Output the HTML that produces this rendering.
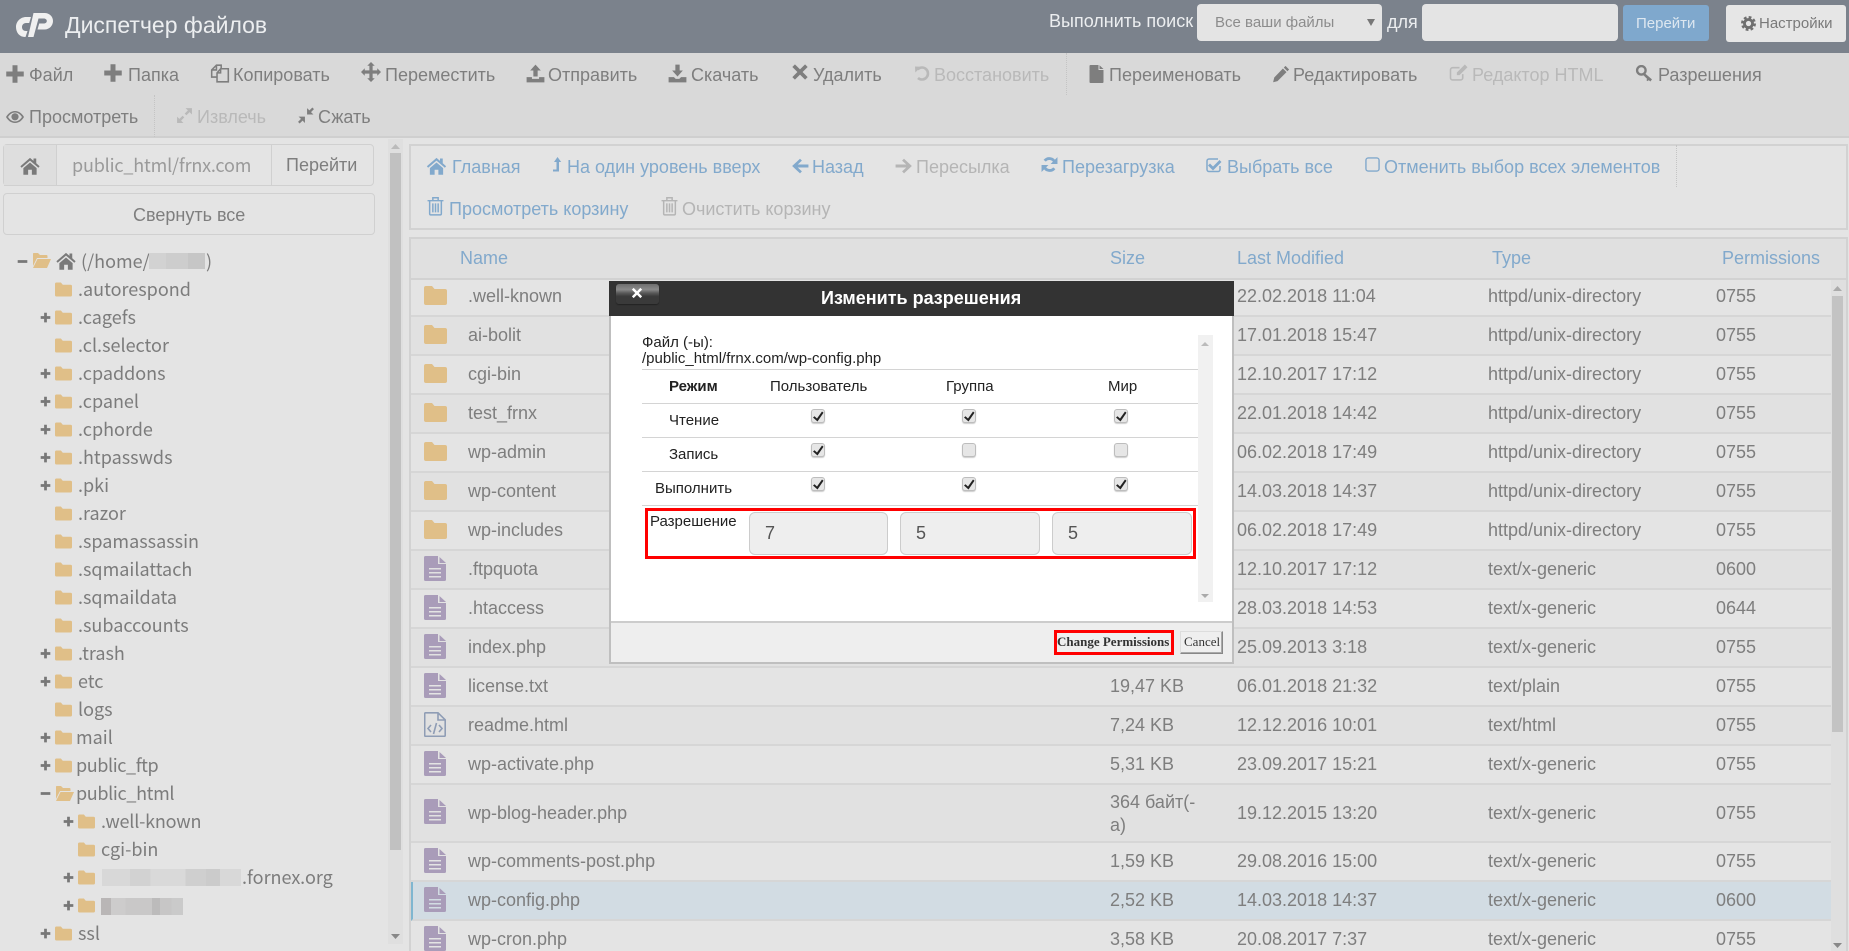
<!DOCTYPE html>
<html lang="ru"><head><meta charset="utf-8"><title>Диспетчер файлов</title>
<style>
html,body{margin:0;padding:0;width:1849px;height:951px;overflow:hidden;background:#e4e4e4}
body{position:relative;font:18px/20px "Liberation Sans",sans-serif;color:#7e7e7e}
div,span,svg{position:absolute;box-sizing:border-box}
span{white-space:nowrap}
.d{color:#b9b9b9}.l{color:#82a9cc}.ld{color:#b5b5b5}
svg{fill:currentColor;overflow:visible}
.rows .r{left:0;width:1420px;height:39px;border-bottom:2px solid #d6d6d6;background:#e4e4e4}
.rows .r:nth-child(even){background:#e1e1e1}
.r span{top:8px}.n{left:57px}.s{left:699px}.m{left:826px}.y{left:1077px}.p{left:1305px}
.fo{left:13px;top:8px;width:23px;height:19px;color:#e0bf88}
.fi{left:13px;top:5px;width:22px;height:25px;color:#a99cb9}
.t{font-family:"Noto Sans CJK JP",sans-serif;font-size:18px;line-height:24px;color:#7c7c7c}
.fl{width:17px;height:15px;color:#e0bf88}
.pm{width:11px;height:11px;color:#777}
.mt{color:#222;font-size:15px}
.cb{width:14px;height:14px;background:#e6e6e6;border:1px solid #bdbdbd;border-radius:3px;box-shadow:0 1px 1px #ccc}
.cb svg{left:1px;top:0;width:11px;height:12px;color:#222}
.inp{top:512px;height:43px;background:#eee;border:1px solid #ccc;border-radius:6px;color:#555}
.inp span{left:15px;top:10px;font-size:18px}
</style></head><body>
<svg width="0" height="0" style="position:absolute">
<symbol id="plus" viewBox="0 0 16 16"><path d="M6 1h4v5h5v4h-5v5H6v-5H1V6h5z"/></symbol>
<symbol id="minus" viewBox="0 0 16 16"><path d="M1 6h14v4H1z"/></symbol>
<symbol id="copy" viewBox="0 0 16 16"><path fill="none" stroke="currentColor" stroke-width="1.300" d="M5.500 11H1V5l4-4h4v3M5.500 15V7.500l3-3.500H15v11zM8.500 4v3.500H5.500M5 1v4H1"/></symbol>
<symbol id="move" viewBox="0 0 16 16"><path d="M8 0l3 3H9.300v3.700H13V5l3 3-3 3V9.300H9.300V13H11l-3 3-3-3h1.700V9.300H3V11L0 8l3-3v1.700h3.700V3H5z"/></symbol>
<symbol id="up" viewBox="0 0 16 16"><path d="M8 .5l4.500 5H9.800v5H6.200v-5H3.500zM.5 11H5v1.500h6V11h4.500v4.500H.5z"/></symbol>
<symbol id="down" viewBox="0 0 16 16"><path d="M6.200.5h3.600v5h2.700L8 10.500l-4.500-5h2.700zM.5 11H5l1.500 1.500h3L11 11h4.500v4.500H.5z"/></symbol>
<symbol id="x" viewBox="0 0 16 16"><path d="M3.500 1.200L8 5.700l4.500-4.500 2.300 2.300L10.300 8l4.500 4.500-2.300 2.300L8 10.300l-4.500 4.500-2.300-2.300L5.700 8 1.200 3.500z"/></symbol>
<symbol id="undo" viewBox="0 0 16 16"><path fill="none" stroke="currentColor" stroke-width="2.600" d="M3.500 4.500A6 6 0 1 1 4 13"/><path d="M1 1.500l6 .3-5.700 5.700z"/></symbol>
<symbol id="file" viewBox="0 0 16 18"><path d="M2 0h8v5h5v12a1 1 0 0 1-1 1H2a1 1 0 0 1-1-1V1a1 1 0 0 1 1-1zM11 .3L15 4h-4z"/></symbol>
<symbol id="doc" viewBox="0 0 22 25"><path fill-rule="evenodd" d="M1.500 0H14v8h8v15.500a1.500 1.500 0 0 1-1.500 1.500h-19A1.500 1.500 0 0 1 0 23.500V1.500A1.500 1.500 0 0 1 1.500 0zM5 12v1.500h12V12zM5 16v1.500h12V16zM5 20v1.500h12V20z"/><path d="M15.500 1L22 7h-6.500z"/></symbol>
<symbol id="code" viewBox="0 0 22 25"><path fill="none" stroke="currentColor" stroke-width="1.600" d="M1.500.8H14l7.200 7v15.700a.8.800 0 0 1-.8.800H1.500a.8.800 0 0 1-.8-.800V1.500a.8.800 0 0 1 .8-.700zM14 1v7h7M7 13l-3 3.500 3 3.500M15 13l3 3.500-3 3.500M12.500 11l-3 11"/></symbol>
<symbol id="pencil" viewBox="0 0 16 16"><path d="M12 .8l3.200 3.200-1.500 1.500-3.200-3.200zM9.700 3.100l3.200 3.200-8 8-3.900 1 1-4.200z"/></symbol>
<symbol id="edit" viewBox="0 0 18 16"><path fill="none" stroke="currentColor" stroke-width="1.500" d="M12.500 9.500V13a2 2 0 0 1-2 2H3a2 2 0 0 1-2-2V5.500a2 2 0 0 1 2-2h6.500"/><path d="M14.500.5L17 3l-7.500 7.500H7V8z"/></symbol>
<symbol id="key" viewBox="0 0 16 16"><path fill="none" stroke="currentColor" stroke-width="2.200" d="M9.500 5a4 4 0 1 1-8 0 4 4 0 0 1 8 0z"/><path d="M8.500 7.500l7 6-1.500 2-1.500-1.300-1 1-1.300-1 .8-1-3.500-3.500z"/></symbol>
<symbol id="eye" viewBox="0 0 18 14"><path fill-rule="evenodd" d="M9 1C5 1 2 3.500 0 7c2 3.500 5 6 9 6s7-2.500 9-6c-2-3.500-5-6-9-6zM9 2.500C6.500 2.500 4 4 2 7c2 3 4.500 4.500 7 4.500s5-1.500 7-4.500c-2-3-4.500-4.500-7-4.500z"/><circle cx="9" cy="6.800" r="3.600"/></symbol>
<symbol id="expand" viewBox="0 0 16 16"><path d="M9 1h6v6l-2.200-2.200-3 3-1.600-1.600 3-3zM7 15H1V9l2.200 2.200 3-3 1.600 1.600-3 3z"/></symbol>
<symbol id="compress" viewBox="0 0 16 16"><path d="M9 7V1l2.200 2.200L14 .5 15.500 2l-2.800 2.800L15 7zM7 9v6l-2.200-2.200L2 15.500.5 14l2.800-2.800L1 9z"/></symbol>
<symbol id="home" viewBox="0 0 16 16"><path d="M8 1.500L.3 8.200l1 1.200L8 3.700l6.700 5.700 1-1.200L13 5.800V2h-2.200v1.900zM2.700 9.700L8 5.200l5.300 4.500V15H9.500v-4h-3v4H2.700z"/></symbol>
<symbol id="lvl" viewBox="0 0 12 16"><path d="M5.500 0l3.700 5H7v9.500H1v-2h3.500V5H2z"/></symbol>
<symbol id="left" viewBox="0 0 16 16"><path d="M8 1.500L9.700 3.200 6 6.700h9.500v2.600H6l3.700 3.500L8 14.500 1 8z"/></symbol>
<symbol id="right" viewBox="0 0 16 16"><path d="M8 1.500L6.300 3.200 10 6.700H.5v2.600H10l-3.700 3.500L8 14.500 15 8z"/></symbol>
<symbol id="sync" viewBox="0 0 16 16"><path fill="none" stroke="currentColor" stroke-width="2.700" d="M13 6A5.500 5.500 0 0 0 3.500 4.500M3 10a5.500 5.500 0 0 0 9.500 1.500"/><path d="M15.500 1v6.500H9zM.5 15V8.500H7z"/></symbol>
<symbol id="chk" viewBox="0 0 16 16"><path fill="none" stroke="currentColor" stroke-width="1.500" d="M14 9v3.500a2 2 0 0 1-2 2H3a2 2 0 0 1-2-2V4a2 2 0 0 1 2-2h9"/><path d="M4 6.500l3 3L13.500 3l2 2L7 13.500 2 8.500z"/></symbol>
<symbol id="sq" viewBox="0 0 16 16"><rect x="1" y="1" width="14" height="14" rx="2.500" fill="none" stroke="currentColor" stroke-width="1.500"/></symbol>
<symbol id="trash" viewBox="0 0 16 18"><path fill="none" stroke="currentColor" stroke-width="1.400" d="M.5 4h15M2.500 4v12.300c0 .6.400 1 1 1h9c.6 0 1-.4 1-1V4M5.500 4V1.200h5V4M5.500 6.500v8.500M8 6.500v8.500M10.500 6.500v8.500"/></symbol>
<symbol id="gear" viewBox="0 0 16 16"><circle cx="8" cy="8" r="4.300" fill="none" stroke="currentColor" stroke-width="3"/><circle cx="8" cy="8" r="6.600" fill="none" stroke="currentColor" stroke-width="2.800" stroke-dasharray="2.900 2.280"/></symbol>
<symbol id="folder" viewBox="0 0 23 19"><path d="M2 0h6l2.500 3H21a2 2 0 0 1 2 2v12a2 2 0 0 1-2 2H2a2 2 0 0 1-2-2V2a2 2 0 0 1 2-2z"/></symbol>
<symbol id="fopen" viewBox="0 0 19 15"><path d="M1.500 0h4.500l2 2h6.500a1 1 0 0 1 1 1v2H5L1 13V1a1 1 0 0 1 .5-1zM5.500 6H19l-4 9H1z"/></symbol>
<symbol id="ck" viewBox="0 0 11 12"><path d="M1.500 6.200L4 8.500 9 1.500l1.500 1.200L4.500 11.500 0 7.500z"/></symbol>
</svg>

<!-- header -->
<div style="left:0;top:0;width:1849px;height:53px;background:#7b828c"></div>
<svg style="left:16px;top:12px;width:37px;height:25px;color:#f0f0f0" viewBox="0 0 37 25"><path d="M15 5L13.200 11H10C7.500 11 6 13 6 15C6 17.500 7.500 19 10 19H11.500L9.500 25H9C3.500 25 0 20.500 0 15C0 9.500 4.500 5 10 5Z"/><path d="M17.500 1H28.500C33.500 1 37 4.500 37 9C37 13.500 33.500 17.500 28.500 17.500H21.500L23.200 11.500H27.500C29.500 11.500 30.800 10.500 30.800 9C30.800 7.500 29.500 6.500 27.500 6.500H22.500L17.500 25H12Z"/></svg>
<span style="left:65px;top:13px;font-size:23px;line-height:24px;color:#eceef0">Диспетчер файлов</span>
<span style="left:1049px;top:11px;color:#eceef0">Выполнить поиск</span>
<div style="left:1197px;top:4px;width:185px;height:37px;background:#e4e4e4;border-radius:4px"></div>
<span style="left:1215px;top:13px;font-size:15px;color:#8c8c8c">Все ваши файлы</span>
<svg style="left:1367px;top:19px;width:8px;height:7px;color:#777" viewBox="0 0 8 7"><path d="M0 0h8L4 7z"/></svg>
<span style="left:1387px;top:12px;color:#eceef0">для</span>
<div style="left:1422px;top:4px;width:196px;height:37px;background:#e4e4e4;border-radius:4px"></div>
<div style="left:1623px;top:5px;width:86px;height:36px;background:#7fa8cd;border-radius:3px"></div>
<span style="left:1636px;top:14px;font-size:15px;color:#dde7f0">Перейти</span>
<div style="left:1726px;top:5px;width:120px;height:37px;background:#e6e6e6;border-radius:3px"></div>
<svg style="left:1741px;top:16px;width:15px;height:15px;color:#6f6f6f"><use href="#gear"/></svg>
<span style="left:1759px;top:14px;font-size:15px;color:#7a7a7a">Настройки</span>

<!-- toolbar -->
<div style="left:0;top:53px;width:1849px;height:85px;background:#d9d9d9;border-bottom:2px solid #cfcfcf"></div>
<svg style="left:5px;top:64px;width:20px;height:20px"><use href="#plus"/></svg><span style="left:29px;top:65px">Файл</span>
<svg style="left:103px;top:63px;width:20px;height:20px"><use href="#plus"/></svg><span style="left:128px;top:65px">Папка</span>
<svg style="left:210px;top:64px;width:20px;height:19px"><use href="#copy"/></svg><span style="left:233px;top:65px">Копировать</span>
<svg style="left:361px;top:62px;width:20px;height:20px"><use href="#move"/></svg><span style="left:385px;top:65px">Переместить</span>
<svg style="left:526px;top:64px;width:19px;height:19px"><use href="#up"/></svg><span style="left:548px;top:65px">Отправить</span>
<svg style="left:668px;top:64px;width:19px;height:19px"><use href="#down"/></svg><span style="left:691px;top:65px">Скачать</span>
<svg style="left:791px;top:63px;width:18px;height:18px"><use href="#x"/></svg><span style="left:813px;top:65px">Удалить</span>
<svg class="d" style="left:914px;top:65px;width:16px;height:16px"><use href="#undo"/></svg><span class="d" style="left:934px;top:65px">Восстановить</span>
<div style="left:1066px;top:53px;height:42px;border-left:1px dotted #c4c4c4"></div>
<svg style="left:1088px;top:65px;width:17px;height:18px"><use href="#file"/></svg><span style="left:1109px;top:65px">Переименовать</span>
<svg style="left:1272px;top:65px;width:18px;height:18px"><use href="#pencil"/></svg><span style="left:1293px;top:65px">Редактировать</span>
<svg class="d" style="left:1449px;top:64px;width:20px;height:17px"><use href="#edit"/></svg><span class="d" style="left:1472px;top:65px">Редактор HTML</span>
<svg style="left:1635px;top:65px;width:18px;height:17px"><use href="#key"/></svg><span style="left:1658px;top:65px">Разрешения</span>
<svg style="left:6px;top:110px;width:18px;height:14px"><use href="#eye"/></svg><span style="left:29px;top:107px">Просмотреть</span>
<div style="left:154px;top:95px;height:42px;border-left:1px dotted #c4c4c4"></div>
<svg class="d" style="left:176px;top:107px;width:17px;height:17px"><use href="#expand"/></svg><span class="d" style="left:197px;top:107px">Извлечь</span>
<svg style="left:297px;top:107px;width:18px;height:17px"><use href="#compress"/></svg><span style="left:318px;top:107px">Сжать</span>

<!-- left panel -->
<div style="left:3px;top:144px;width:371px;height:42px;background:#e4e4e4;border:1px solid #d0d0d0;border-radius:4px"></div>
<div style="left:4px;top:145px;width:53px;height:41px;background:#dedede;border-right:1px solid #d0d0d0;border-bottom:1px solid #d0d0d0"></div>
<svg style="left:19px;top:156px;width:22px;height:20px;color:#7a7a7a"><use href="#home"/></svg>
<span class="t" style="left:72px;top:153px;color:#9a9a9a;letter-spacing:-.18px">public_html/frnx.com</span>
<div style="left:271px;top:145px;height:40px;border-left:1px solid #d0d0d0"></div>
<span style="left:286px;top:155px">Перейти</span>
<div style="left:3px;top:193px;width:372px;height:42px;background:#e4e4e4;border:1px solid #d0d0d0;border-radius:4px"></div>
<span style="left:133px;top:205px">Свернуть все</span>

<svg class="pm" style="left:17px;top:256px"><use href="#minus"/></svg>
<svg class="fl" style="left:32px;top:253px;width:19px"><use href="#fopen"/></svg>
<svg style="left:56px;top:251px;width:20px;height:20px;color:#7a7a7a"><use href="#home"/></svg>
<span class="t" style="left:81px;top:249px">(/home/</span>
<div style="left:149px;top:253px;width:56px;height:16px;background:linear-gradient(90deg,#d2d2d2 0 30%,#cdcdcd 30% 70%,#c6c6c6 70%)"></div>
<span class="t" style="left:206px;top:249px">)</span>

<svg class="fl" style="left:55px;top:282px"><use href="#folder"/></svg><span class="t" style="left:78px;top:277px">.autorespond</span>
<svg class="pm" style="left:40px;top:312px"><use href="#plus"/></svg><svg class="fl" style="left:55px;top:310px"><use href="#folder"/></svg><span class="t" style="left:78px;top:305px">.cagefs</span>
<svg class="fl" style="left:55px;top:338px"><use href="#folder"/></svg><span class="t" style="left:78px;top:333px">.cl.selector</span>
<svg class="pm" style="left:40px;top:368px"><use href="#plus"/></svg><svg class="fl" style="left:55px;top:366px"><use href="#folder"/></svg><span class="t" style="left:78px;top:361px">.cpaddons</span>
<svg class="pm" style="left:40px;top:396px"><use href="#plus"/></svg><svg class="fl" style="left:55px;top:394px"><use href="#folder"/></svg><span class="t" style="left:78px;top:389px">.cpanel</span>
<svg class="pm" style="left:40px;top:424px"><use href="#plus"/></svg><svg class="fl" style="left:55px;top:422px"><use href="#folder"/></svg><span class="t" style="left:78px;top:417px">.cphorde</span>
<svg class="pm" style="left:40px;top:452px"><use href="#plus"/></svg><svg class="fl" style="left:55px;top:450px"><use href="#folder"/></svg><span class="t" style="left:78px;top:445px">.htpasswds</span>
<svg class="pm" style="left:40px;top:480px"><use href="#plus"/></svg><svg class="fl" style="left:55px;top:478px"><use href="#folder"/></svg><span class="t" style="left:78px;top:473px">.pki</span>
<svg class="fl" style="left:55px;top:506px"><use href="#folder"/></svg><span class="t" style="left:78px;top:501px">.razor</span>
<svg class="fl" style="left:55px;top:534px"><use href="#folder"/></svg><span class="t" style="left:78px;top:529px">.spamassassin</span>
<svg class="fl" style="left:55px;top:562px"><use href="#folder"/></svg><span class="t" style="left:78px;top:557px">.sqmailattach</span>
<svg class="fl" style="left:55px;top:590px"><use href="#folder"/></svg><span class="t" style="left:78px;top:585px">.sqmaildata</span>
<svg class="fl" style="left:55px;top:618px"><use href="#folder"/></svg><span class="t" style="left:78px;top:613px">.subaccounts</span>
<svg class="pm" style="left:40px;top:648px"><use href="#plus"/></svg><svg class="fl" style="left:55px;top:646px"><use href="#folder"/></svg><span class="t" style="left:78px;top:641px">.trash</span>
<svg class="pm" style="left:40px;top:676px"><use href="#plus"/></svg><svg class="fl" style="left:55px;top:674px"><use href="#folder"/></svg><span class="t" style="left:78px;top:669px">etc</span>
<svg class="fl" style="left:55px;top:702px"><use href="#folder"/></svg><span class="t" style="left:78px;top:697px">logs</span>
<svg class="pm" style="left:40px;top:732px"><use href="#plus"/></svg><svg class="fl" style="left:55px;top:730px"><use href="#folder"/></svg><span class="t" style="left:76px;top:725px">mail</span>
<svg class="pm" style="left:40px;top:760px"><use href="#plus"/></svg><svg class="fl" style="left:55px;top:758px"><use href="#folder"/></svg><span class="t" style="left:76px;top:753px;letter-spacing:-.4px">public_ftp</span>
<svg class="pm" style="left:40px;top:788px"><use href="#minus"/></svg><svg class="fl" style="left:55px;top:786px;width:19px"><use href="#fopen"/></svg><span class="t" style="left:76px;top:781px;letter-spacing:-.35px">public_html</span>
<svg class="pm" style="left:63px;top:816px"><use href="#plus"/></svg><svg class="fl" style="left:78px;top:814px"><use href="#folder"/></svg><span class="t" style="left:101px;top:809px;letter-spacing:-.2px">.well-known</span>
<svg class="fl" style="left:78px;top:842px"><use href="#folder"/></svg><span class="t" style="left:101px;top:837px">cgi-bin</span>
<svg class="pm" style="left:63px;top:872px"><use href="#plus"/></svg><svg class="fl" style="left:78px;top:870px"><use href="#folder"/></svg>
<div style="left:102px;top:869px;width:139px;height:17px;background:linear-gradient(90deg,#d8d8d8 0 20%,#d2d2d2 20% 35%,#d9d9d9 35% 60%,#cfcfcf 60% 75%,#cbcbcb 75% 85%,#d8d8d8 85%)"></div><span class="t" style="left:242px;top:865px">.fornex.org</span>
<svg class="pm" style="left:63px;top:900px"><use href="#plus"/></svg><svg class="fl" style="left:78px;top:898px"><use href="#folder"/></svg>
<div style="left:101px;top:898px;width:82px;height:17px;background:linear-gradient(90deg,#b9b6b6 0 12%,#cdcccc 12% 30%,#c9c8c8 30% 62%,#bcbbbb 62% 72%,#c7c6c6 72% 86%,#cacaca 86%)"></div>
<svg class="pm" style="left:40px;top:928px"><use href="#plus"/></svg><svg class="fl" style="left:55px;top:926px"><use href="#folder"/></svg><span class="t" style="left:78px;top:921px">ssl</span>

<!-- left scrollbar -->
<div style="left:388px;top:139px;width:15px;height:805px;background:#dfdfdf"></div>
<div style="left:390px;top:153px;width:11px;height:697px;background:#c1c1c1"></div>
<svg style="left:391px;top:144px;width:9px;height:5px;color:#bbb" viewBox="0 0 9 5"><path d="M0 5h9L4.500 0z"/></svg>
<svg style="left:391px;top:934px;width:9px;height:5px;color:#888" viewBox="0 0 9 5"><path d="M0 0h9L4.500 5z"/></svg>

<!-- right toolbar -->
<div style="left:409px;top:144px;width:1439px;height:86px;border:2px solid #d2d2d2"></div>
<svg class="l" style="left:426px;top:156px;width:21px;height:20px"><use href="#home"/></svg><span class="l" style="left:452px;top:157px">Главная</span>
<svg class="l" style="left:552px;top:156px;width:12px;height:18px"><use href="#lvl"/></svg><span class="l" style="left:567px;top:157px">На один уровень вверх</span>
<svg class="l" style="left:791px;top:157px;width:18px;height:18px"><use href="#left"/></svg><span class="l" style="left:812px;top:157px">Назад</span>
<svg class="ld" style="left:895px;top:157px;width:18px;height:18px"><use href="#right"/></svg><span class="ld" style="left:916px;top:157px">Пересылка</span>
<svg class="l" style="left:1041px;top:156px;width:17px;height:17px"><use href="#sync"/></svg><span class="l" style="left:1062px;top:157px">Перезагрузка</span>
<svg class="l" style="left:1206px;top:157px;width:16px;height:16px"><use href="#chk"/></svg><span class="l" style="left:1227px;top:157px">Выбрать все</span>
<svg class="l" style="left:1365px;top:157px;width:15px;height:15px"><use href="#sq"/></svg><span class="l" style="left:1384px;top:157px">Отменить выбор всех элементов</span>
<div style="left:1676px;top:145px;height:42px;border-left:1px dotted #c4c4c4"></div>
<svg class="l" style="left:427px;top:196px;width:17px;height:20px"><use href="#trash"/></svg><span class="l" style="left:449px;top:199px">Просмотреть корзину</span>
<svg class="ld" style="left:661px;top:196px;width:17px;height:20px"><use href="#trash"/></svg><span class="ld" style="left:682px;top:199px">Очистить корзину</span>

<!-- table rows -->
<div class="rows" style="left:411px;top:0;width:1420px;height:951px">
<div class="r" style="top:278px"><svg class="fo"><use href="#folder"/></svg><span class="n">.well-known</span><span class="m">22.02.2018 11:04</span><span class="y">httpd/unix-directory</span><span class="p">0755</span></div>
<div class="r" style="top:317px"><svg class="fo"><use href="#folder"/></svg><span class="n">ai-bolit</span><span class="m">17.01.2018 15:47</span><span class="y">httpd/unix-directory</span><span class="p">0755</span></div>
<div class="r" style="top:356px"><svg class="fo"><use href="#folder"/></svg><span class="n">cgi-bin</span><span class="m">12.10.2017 17:12</span><span class="y">httpd/unix-directory</span><span class="p">0755</span></div>
<div class="r" style="top:395px"><svg class="fo"><use href="#folder"/></svg><span class="n">test_frnx</span><span class="m">22.01.2018 14:42</span><span class="y">httpd/unix-directory</span><span class="p">0755</span></div>
<div class="r" style="top:434px"><svg class="fo"><use href="#folder"/></svg><span class="n">wp-admin</span><span class="m">06.02.2018 17:49</span><span class="y">httpd/unix-directory</span><span class="p">0755</span></div>
<div class="r" style="top:473px"><svg class="fo"><use href="#folder"/></svg><span class="n">wp-content</span><span class="m">14.03.2018 14:37</span><span class="y">httpd/unix-directory</span><span class="p">0755</span></div>
<div class="r" style="top:512px"><svg class="fo"><use href="#folder"/></svg><span class="n">wp-includes</span><span class="m">06.02.2018 17:49</span><span class="y">httpd/unix-directory</span><span class="p">0755</span></div>
<div class="r" style="top:551px"><svg class="fi"><use href="#doc"/></svg><span class="n">.ftpquota</span><span class="m">12.10.2017 17:12</span><span class="y">text/x-generic</span><span class="p">0600</span></div>
<div class="r" style="top:590px"><svg class="fi"><use href="#doc"/></svg><span class="n">.htaccess</span><span class="m">28.03.2018 14:53</span><span class="y">text/x-generic</span><span class="p">0644</span></div>
<div class="r" style="top:629px"><svg class="fi"><use href="#doc"/></svg><span class="n">index.php</span><span class="m">25.09.2013 3:18</span><span class="y">text/x-generic</span><span class="p">0755</span></div>
<div class="r" style="top:668px"><svg class="fi"><use href="#doc"/></svg><span class="n">license.txt</span><span class="s">19,47 KB</span><span class="m">06.01.2018 21:32</span><span class="y">text/plain</span><span class="p">0755</span></div>
<div class="r" style="top:707px"><svg class="fi" style="color:#8f9db5"><use href="#code"/></svg><span class="n">readme.html</span><span class="s">7,24 KB</span><span class="m">12.12.2016 10:01</span><span class="y">text/html</span><span class="p">0755</span></div>
<div class="r" style="top:746px"><svg class="fi"><use href="#doc"/></svg><span class="n">wp-activate.php</span><span class="s">5,31 KB</span><span class="m">23.09.2017 15:21</span><span class="y">text/x-generic</span><span class="p">0755</span></div>
<div class="r" style="top:785px;height:58px"><svg class="fi" style="top:14px"><use href="#doc"/></svg><span class="n" style="top:18px">wp-blog-header.php</span><span class="s" style="top:6px;line-height:23px">364 байт(-<br>а)</span><span class="m" style="top:18px">19.12.2015 13:20</span><span class="y" style="top:18px">text/x-generic</span><span class="p" style="top:18px">0755</span></div>
<div class="r" style="top:843px"><svg class="fi"><use href="#doc"/></svg><span class="n">wp-comments-post.php</span><span class="s">1,59 KB</span><span class="m">29.08.2016 15:00</span><span class="y">text/x-generic</span><span class="p">0755</span></div>
<div class="r" style="top:882px;background:#d2dce3;border-left:2px solid #7fb6d0"><svg class="fi" style="left:11px"><use href="#doc"/></svg><span class="n" style="left:55px">wp-config.php</span><span class="s" style="left:697px">2,52 KB</span><span class="m" style="left:824px">14.03.2018 14:37</span><span class="y" style="left:1075px">text/x-generic</span><span class="p" style="left:1303px">0600</span></div>
<div class="r" style="top:921px"><svg class="fi"><use href="#doc"/></svg><span class="n">wp-cron.php</span><span class="s">3,58 KB</span><span class="m">20.08.2017 7:37</span><span class="y">text/x-generic</span><span class="p">0755</span></div>
</div>

<!-- table header and frame -->
<div style="left:409px;top:237px;width:1439px;height:43px;background:#e0e0e0;border:2px solid #d2d2d2;border-bottom:2px solid #d2d2d2"></div>
<div style="left:409px;top:237px;width:2px;height:714px;background:#d2d2d2"></div>
<div style="left:1846px;top:237px;width:2px;height:714px;background:#d2d2d2"></div>
<span class="l" style="left:460px;top:248px">Name</span>
<span class="l" style="left:1110px;top:248px">Size</span>
<span class="l" style="left:1237px;top:248px">Last Modified</span>
<span class="l" style="left:1492px;top:248px">Type</span>
<span class="l" style="left:1722px;top:248px">Permissions</span>

<!-- table scrollbar -->
<div style="left:1831px;top:280px;width:15px;height:671px;background:#dfdfdf"></div>
<div style="left:1832px;top:296px;width:11px;height:436px;background:#c3c3c3"></div>
<svg style="left:1833px;top:286px;width:9px;height:5px;color:#aaa" viewBox="0 0 9 5"><path d="M0 5h9L4.500 0z"/></svg>
<svg style="left:1833px;top:943px;width:9px;height:5px;color:#888" viewBox="0 0 9 5"><path d="M0 0h9L4.500 5z"/></svg>

<!-- modal -->
<div style="left:609px;top:281px;width:625px;height:383px;background:#fff;border:2px solid #bfbfbf"></div>
<div style="left:609px;top:281px;width:625px;height:35px;background:#333"></div>
<div style="left:616px;top:284px;width:43px;height:20px;border-radius:3px;background:linear-gradient(#6f6f6f 0,#8a8a8a 28%,#5a5a5a 45%,#3a3a3a 62%,#3a3a3a 100%);box-shadow:0 1px 1px #222"></div>
<svg style="left:631px;top:287px;width:12px;height:12px;color:#fff"><use href="#x"/></svg>
<span style="left:821px;top:288px;font-weight:bold;color:#fff">Изменить разрешения</span>

<span class="mt" style="left:642px;top:333px">Файл (-ы):</span>
<span class="mt" style="left:642px;top:349px">/public_html/frnx.com/wp-config.php</span>
<div style="left:642px;top:369px;width:556px;height:1px;background:#d4d4d4"></div>
<div style="left:642px;top:403px;width:556px;height:1px;background:#d4d4d4"></div>
<div style="left:642px;top:437px;width:556px;height:1px;background:#d4d4d4"></div>
<div style="left:642px;top:471px;width:556px;height:1px;background:#d4d4d4"></div>
<div style="left:642px;top:505px;width:556px;height:1px;background:#d4d4d4"></div>
<span class="mt" style="left:669px;top:377px;font-weight:bold">Режим</span>
<span class="mt" style="left:770px;top:377px">Пользователь</span>
<span class="mt" style="left:946px;top:377px">Группа</span>
<span class="mt" style="left:1108px;top:377px">Мир</span>
<span class="mt" style="left:669px;top:411px">Чтение</span>
<span class="mt" style="left:669px;top:445px">Запись</span>
<span class="mt" style="left:655px;top:479px">Выполнить</span>

<div class="cb" style="left:811px;top:409px"><svg><use href="#ck"/></svg></div>
<div class="cb" style="left:962px;top:409px"><svg><use href="#ck"/></svg></div>
<div class="cb" style="left:1114px;top:409px"><svg><use href="#ck"/></svg></div>
<div class="cb" style="left:811px;top:443px"><svg><use href="#ck"/></svg></div>
<div class="cb" style="left:962px;top:443px"></div>
<div class="cb" style="left:1114px;top:443px"></div>
<div class="cb" style="left:811px;top:477px"><svg><use href="#ck"/></svg></div>
<div class="cb" style="left:962px;top:477px"><svg><use href="#ck"/></svg></div>
<div class="cb" style="left:1114px;top:477px"><svg><use href="#ck"/></svg></div>

<div style="left:645px;top:508px;width:551px;height:51px;border:3px solid #f00"></div>
<span class="mt" style="left:650px;top:512px">Разрешение</span>
<div class="inp" style="left:749px;width:139px"><span>7</span></div>
<div class="inp" style="left:900px;width:140px"><span>5</span></div>
<div class="inp" style="left:1052px;width:140px"><span>5</span></div>

<div style="left:1198px;top:335px;width:15px;height:267px;background:#f1f1f1"></div>
<svg style="left:1201px;top:342px;width:8px;height:4px;color:#bbb" viewBox="0 0 8 4"><path d="M0 4h8L4 0z"/></svg>
<svg style="left:1201px;top:594px;width:8px;height:4px;color:#aaa" viewBox="0 0 8 4"><path d="M0 0h8L4 4z"/></svg>

<div style="left:611px;top:621px;width:621px;height:41px;background:#eee;border-top:2px solid #ccc"></div>
<div style="left:1054px;top:630px;width:120px;height:25px;background:#efefef;border:3px solid #f00"></div>
<span style="left:1057px;top:632px;font:bold 13px/20px 'Liberation Serif',serif;color:#333">Change Permissions</span>
<div style="left:1180px;top:631px;width:43px;height:23px;background:#efefef;border:1px solid;border-color:#ddd #888 #888 #ddd;box-shadow:inset -1px -1px 0 #aaa"></div>
<span style="left:1184px;top:632px;font:13px/20px 'Liberation Serif',serif;color:#333">Cancel</span>
</body></html>
